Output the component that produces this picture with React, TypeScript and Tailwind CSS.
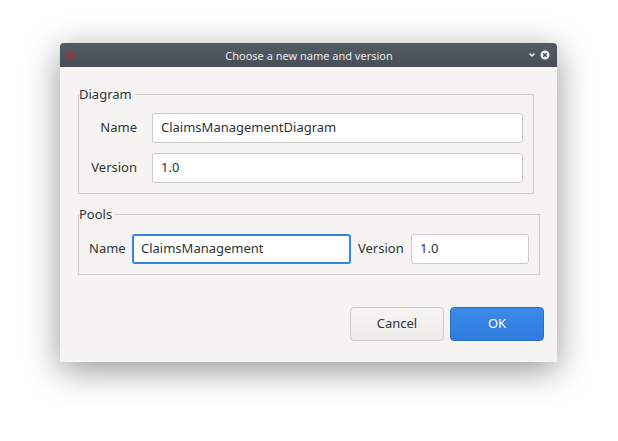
import React from "react";

export default function App() {
  const font = { fontFamily: '"Noto Sans", "DejaVu Sans", sans-serif' };
  return (
    <div className="w-[618px] h-[441px] bg-white pl-[60px] pt-[43px]" style={font}>
      <div className="w-[497px] h-[319px] flex flex-col rounded-t-[4px] rounded-b-[2px] overflow-hidden shadow-[0_8px_34px_rgba(0,0,0,0.42)]">
        {/* Title bar */}
        <div className="h-[24px] shrink-0 flex items-center bg-gradient-to-b from-[#535b64] to-[#474e56] px-[6px] relative">
          <svg width="9" height="9" viewBox="0 0 9 9" className="ml-[1px]">
            <path d="M2 1 L2 8 M2 4 Q4 2 6 3 M5 1 L7 3 M4 6 L7 8" stroke="#d3222e" strokeWidth="1.4" fill="none" />
          </svg>
          <div className="flex-1 pl-[14px] text-center text-[11px] text-[#e8eaec] leading-none">Choose a new name and version</div>
          <svg width="8" height="6" viewBox="0 0 8 6" className="mr-[4px]">
            <path d="M1.5 1.5 L4 4 L6.5 1.5" stroke="#e8eaec" strokeWidth="1.5" fill="none" />
          </svg>
          <svg width="10" height="10" viewBox="0 0 10 10" className="mr-[1px]">
            <circle cx="5" cy="5" r="4.5" fill="#eef0f2" />
            <path d="M3.2 3.2 L6.8 6.8 M6.8 3.2 L3.2 6.8" stroke="#474e56" strokeWidth="1.4" />
          </svg>
        </div>
        {/* Body */}
        <div className="flex-1 flex flex-col bg-[#f5f4f2] text-[13px] text-[#2e3436]">
          <div className="px-[18px] pt-[18px]">
            <fieldset className="w-[456px] border border-[#cfcdca] px-0 pb-[10px] m-0">
              <legend className="px-0 pr-[2px] leading-[18px] text-[13px]">Diagram</legend>
              <div className="flex flex-col gap-[10px] pt-[10px]">
                <div className="flex items-center">
                  <div className="w-[58px] text-right">Name</div>
                  <div className="ml-[15px] w-[371px] h-[30px] bg-white border border-[#cdcbc8] rounded-[3px] flex items-center px-[8px]">ClaimsManagementDiagram</div>
                </div>
                <div className="flex items-center">
                  <div className="w-[58px] text-right">Version</div>
                  <div className="ml-[15px] w-[371px] h-[30px] bg-white border border-[#cdcbc8] rounded-[3px] flex items-center px-[8px]">1.0</div>
                </div>
              </div>
            </fieldset>
            <fieldset className="mt-[11px] w-[462px] border border-[#cfcdca] px-0 pb-[10px] m-0">
              <legend className="px-0 pr-[2px] leading-[18px] text-[13px]">Pools</legend>
              <div className="flex items-center pl-[10px] pt-[11px]">
                <div className="w-[37px]">Name</div>
                <div className="ml-[6px] w-[219px] h-[30px] bg-white border-2 border-[#3584e4] rounded-[3px] flex items-center px-[7px]">ClaimsManagement</div>
                <div className="ml-[7px] w-[47px]">Version</div>
                <div className="ml-[6px] w-[118px] h-[30px] bg-white border border-[#cdcbc8] rounded-[3px] flex items-center px-[8px]">1.0</div>
              </div>
            </fieldset>
          </div>
          <div className="mt-auto flex justify-end gap-[6px] pr-[13px] pb-[21px]">
            <div className="w-[94px] h-[34px] rounded-[4px] border border-[#cdcbc8] bg-gradient-to-b from-[#f6f5f4] to-[#edebe9] flex items-center justify-center text-[13px] text-[#2e3436]">Cancel</div>
            <div className="w-[94px] h-[34px] rounded-[4px] border border-[#2a6fc9] bg-gradient-to-b from-[#3a8ae6] to-[#2f7bdf] flex items-center justify-center text-[13px] text-white">OK</div>
          </div>
        </div>
      </div>
    </div>
  );
}
